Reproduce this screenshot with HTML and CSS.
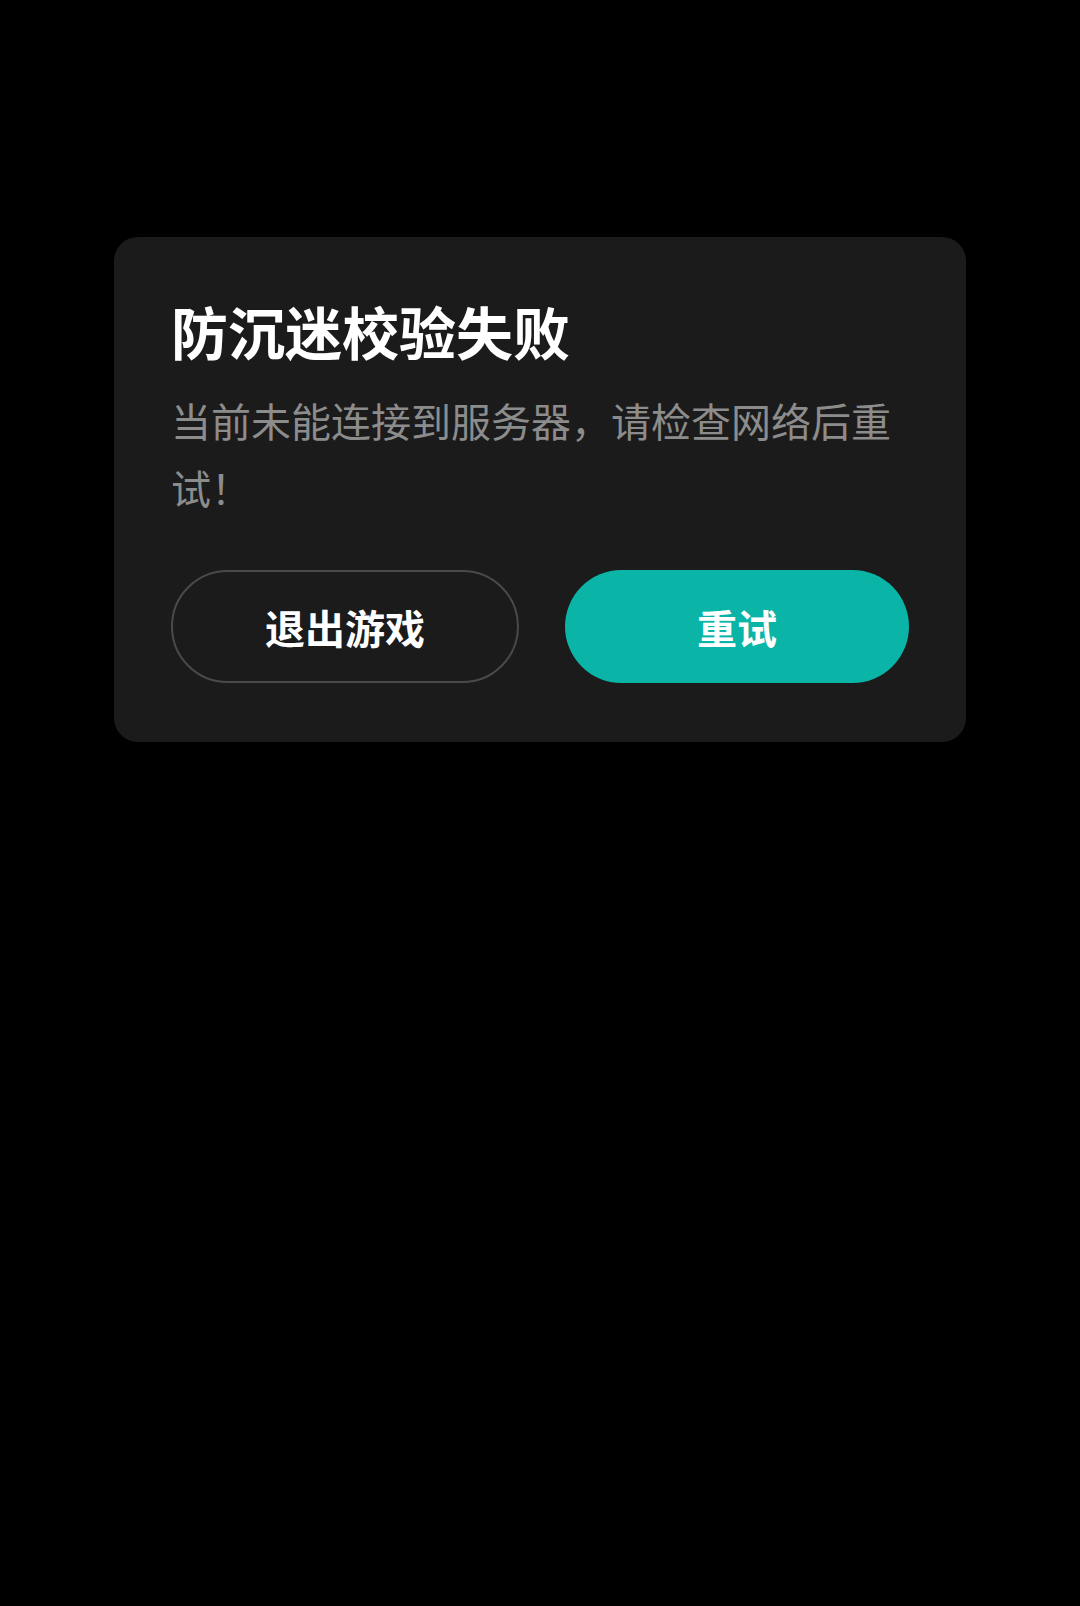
FILE: index.html
```html
<!DOCTYPE html>
<html lang="zh-CN">
<head>
    <meta charset="UTF-8">
    <meta name="viewport" content="width=device-width, initial-scale=1.0">
    <title>防沉迷校验失败</title>
    <link rel="stylesheet" href="styles.css">
</head>
<body>
    <div class="dialog">
        <h1 class="dialog-title">防沉迷校验失败</h1>
        <p class="dialog-text">当前未能连接到服务器，请检查网络后重试！</p>
        <div class="dialog-actions">
            <button class="btn btn-outline">退出游戏</button>
            <button class="btn btn-primary">重试</button>
        </div>
    </div>
</body>
</html>
```

FILE: styles.css
```css
body {
    margin: 0;
    background-color: #000;
    font-family: "Noto Sans CJK SC", "Noto Sans", sans-serif;
}
.dialog {
    width: 852px;
    box-sizing: border-box;
    margin: 237px auto 0;
    padding: 59px 57px 59px;
    background-color: #1b1b1b;
    border-radius: 24px;
}
.dialog-title {
    margin: 0;
    color: #fff;
    font-size: 57px;
    font-weight: bold;
    line-height: 68px;
}
.dialog-text {
    margin: 23px 0 0;
    color: #8c8c8c;
    font-size: 40px;
    line-height: 67px;
}
.dialog-actions {
    display: flex;
    gap: 46px;
    margin-top: 49px;
}
.btn {
    flex: 1;
    height: 113px;
    border-radius: 57px;
    font-family: inherit;
    font-size: 40px;
    font-weight: bold;
    color: #fff;
    cursor: pointer;
}
.btn-outline {
    background: transparent;
    border: 2px solid #4a4a4a;
}
.btn-primary {
    background: #0ab5a8;
    border: none;
}
```
